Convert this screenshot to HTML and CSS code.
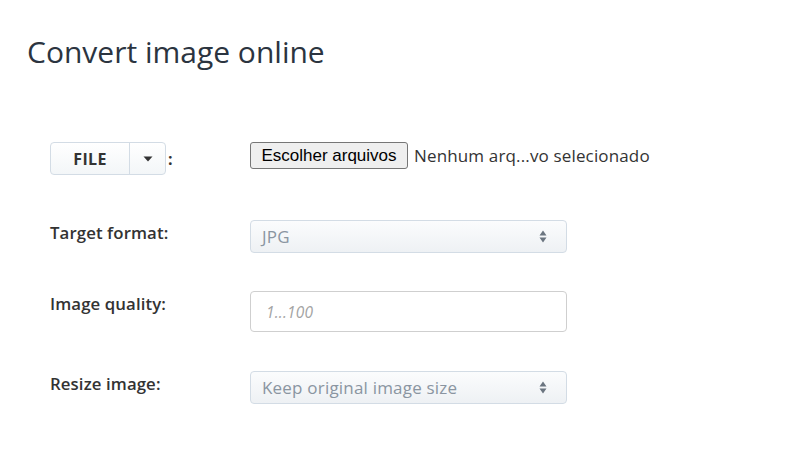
FILE: index.html
```html
<!DOCTYPE html>
<html lang="pt">
<head>
<meta charset="utf-8">
<title>Convert image online</title>
<link rel="stylesheet" href="styles.css">
</head>
<body>
<main class="page">
  <h1 class="title">Convert image online</h1>
  <form class="form">
    <div class="row row-file">
      <div class="label">
        <div class="split">
          <button type="button" class="split-main">FILE</button>
          <button type="button" class="split-caret" aria-label="Choose source">
            <svg width="10" height="6" viewBox="0 0 10 6"><path d="M0.5 0.5h9L5 5.5z" fill="#333"/></svg>
          </button>
        </div>
        <span class="colon">:</span>
      </div>
      <div class="control file-pick">
        <button type="button" class="file-btn">Escolher arquivos</button>
        <span class="file-name">Nenhum arq...vo selecionado</span>
      </div>
    </div>

    <div class="row">
      <label class="label text">Target format:</label>
      <div class="control">
        <div class="select">
          <span>JPG</span>
          <svg class="updown" width="8" height="13" viewBox="0 0 8 13"><path d="M4 0.5L7.5 5.5h-7z M4 12.5L7.5 7.5h-7z" fill="#6b7580"/></svg>
        </div>
      </div>
    </div>

    <div class="row">
      <label class="label text">Image quality:</label>
      <div class="control">
        <div class="input"><span class="placeholder">1...100</span></div>
      </div>
    </div>

    <div class="row">
      <label class="label text">Resize image:</label>
      <div class="control">
        <div class="select">
          <span>Keep original image size</span>
          <svg class="updown" width="8" height="13" viewBox="0 0 8 13"><path d="M4 0.5L7.5 5.5h-7z M4 12.5L7.5 7.5h-7z" fill="#6b7580"/></svg>
        </div>
      </div>
    </div>
  </form>
</main>
</body>
</html>
```

FILE: styles.css
```css
* { box-sizing: border-box; }

html, body {
  margin: 0;
  background: #ffffff;
}

body {
  font-family: "Open Sans", "DejaVu Sans", sans-serif;
  color: #333;
}

.page {
  padding: 31px 0 0 27px;
}

.title {
  margin: 0;
  font-size: 30px;
  font-weight: 400;
  line-height: 42px;
  color: #2b3440;
}

.form {
  display: flex;
  flex-direction: column;
  padding: 69px 0 0 23px;
}

.row {
  display: flex;
  align-items: flex-start;
}

.row-file { height: 78px; }
.row:nth-child(2) { height: 71px; }
.row:nth-child(3) { height: 80px; }

.label {
  width: 200px;
  flex: none;
  display: flex;
  align-items: center;
}

.label.text {
  padding-top: 0;
  font-size: 16.8px;
  font-weight: 600;
  letter-spacing: 0.1px;
  line-height: 26px;
  color: #333;
}

.split {
  display: flex;
  height: 33px;
  border: 1px solid #d3dce5;
  border-radius: 4px;
  background: linear-gradient(#ffffff, #f3f6f8);
  overflow: hidden;
}

.split button {
  border: 0;
  background: transparent;
  margin: 0;
  padding: 0;
  font-family: inherit;
  color: #333;
}

.split-main {
  width: 79px;
  font-size: 16px;
  font-weight: 700;
  letter-spacing: 0.3px;
  border-right: 1px solid #d3dce5 !important;
}

.split-caret {
  width: 35px;
  display: flex;
  align-items: center;
  justify-content: center;
}

.colon {
  margin-left: 2px;
  font-size: 16px;
  font-weight: 700;
  line-height: 20px;
}

.control {
  width: 317px;
}

.file-pick {
  width: auto;
  display: flex;
  align-items: center;
}

.file-btn {
  height: 27px;
  width: 158px;
  margin: 0;
  padding: 0 4px;
  border: 1px solid #767676;
  border-radius: 3px;
  background: #efefef;
  font-family: "Liberation Sans", Arial, sans-serif;
  font-size: 17px;
  color: #000;
}

.file-name {
  margin-left: 6px;
  font-size: 17px;
  letter-spacing: 0.15px;
  color: #333;
}

.select {
  height: 33px;
  display: flex;
  align-items: center;
  justify-content: space-between;
  padding: 0 19px 0 11px;
  border: 1px solid #d3dce5;
  border-radius: 4px;
  background: linear-gradient(#fbfcfd, #eef1f4);
  font-size: 17px;
  letter-spacing: 0.2px;
  color: #8a95a1;
}

.input {
  height: 41px;
  display: flex;
  align-items: center;
  padding: 0 15px;
  border: 1px solid #cfcfcf;
  border-radius: 4px;
  background: #fff;
}

.placeholder {
  font-size: 15.5px;
  font-style: italic;
  letter-spacing: 0.2px;
  color: #a3a3a3;
}
```
